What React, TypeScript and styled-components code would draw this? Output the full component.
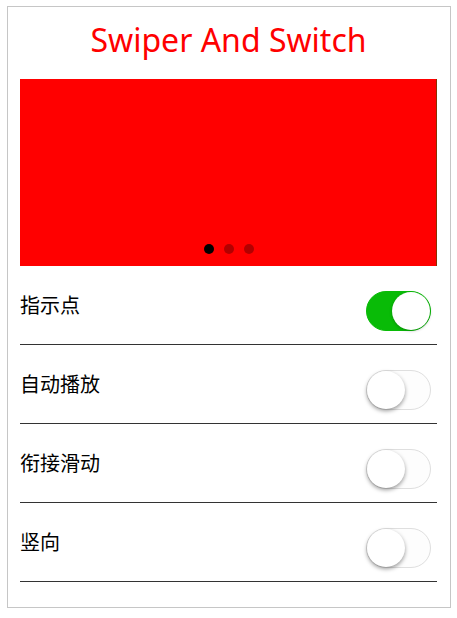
import React, { useState } from "react";
import styled, { createGlobalStyle } from "styled-components";

const Global = createGlobalStyle`
  html, body { margin: 0; padding: 0; background: #fff; }
  body { font-family: "Noto Sans", "Noto Sans CJK SC", sans-serif; }
`;

const Page = styled.div`
  box-sizing: border-box;
  width: 444px;
  margin: 6px 0 0 7px;
  border: 1px solid #c6c6c6;
  padding: 0 13px 25px 12px;
`;

const Title = styled.h1`
  margin: 0;
  padding-top: 6px;
  height: 66px;
  line-height: 54px;
  text-align: center;
  font-weight: 400;
  font-size: 32px;
  color: #ff0000;
  font-family: "Noto Sans", sans-serif;
`;

const Swiper = styled.div`
  position: relative;
  height: 187px;
  background: #ff0000;
  display: flex;
  align-items: flex-end;
  justify-content: center;
  box-shadow: inset -1px 0 0 #8a3000;
`;

const Dots = styled.div`
  display: flex;
  gap: 10px;
  margin-bottom: 12px;
`;

const Dot = styled.span<{ $active?: boolean }>`
  width: 10px;
  height: 10px;
  border-radius: 50%;
  background: ${(p) => (p.$active ? "#000" : "rgba(0,0,0,0.3)")};
`;

const Row = styled.div`
  box-sizing: border-box;
  height: 79px;
  padding-top: 25px;
  border-bottom: 1px solid #333;
  display: flex;
  justify-content: space-between;
  align-items: flex-start;
`;

const Label = styled.span`
  font-family: "Noto Sans CJK SC", sans-serif;
  font-size: 20px;
  line-height: 28px;
  color: #000;
`;

const Track = styled.button<{ $on: boolean }>`
  position: relative;
  box-sizing: border-box;
  width: 65px;
  height: 40px;
  margin-right: 6px;
  padding: 0;
  border-radius: 20px;
  border: 1px solid ${(p) => (p.$on ? "#09bb07" : "#dfdfdf")};
  background: ${(p) => (p.$on ? "#09bb07" : "#fdfdfd")};
  cursor: pointer;
  outline: none;
`;

const Knob = styled.span<{ $on: boolean }>`
  position: absolute;
  top: 0;
  left: ${(p) => (p.$on ? "25px" : "0")};
  width: 38px;
  height: 38px;
  border-radius: 50%;
  background: #fff;
  box-shadow: ${(p) =>
    p.$on ? "0 1px 3px rgba(0,0,0,0.25)" : "0 2px 4px rgba(0,0,0,0.4)"};
`;

function Switch({ initial }: { initial: boolean }) {
  const [on, setOn] = useState(initial);
  return (
    <Track $on={on} onClick={() => setOn(!on)}>
      <Knob $on={on} />
    </Track>
  );
}

const rows = [
  { label: "指示点", on: true },
  { label: "自动播放", on: false },
  { label: "衔接滑动", on: false },
  { label: "竖向", on: false },
];

export default function App() {
  return (
    <>
      <Global />
      <Page>
        <Title>Swiper And Switch</Title>
        <Swiper>
          <Dots>
            <Dot $active />
            <Dot />
            <Dot />
          </Dots>
        </Swiper>
        {rows.map((r) => (
          <Row key={r.label}>
            <Label>{r.label}</Label>
            <Switch initial={r.on} />
          </Row>
        ))}
      </Page>
    </>
  );
}
